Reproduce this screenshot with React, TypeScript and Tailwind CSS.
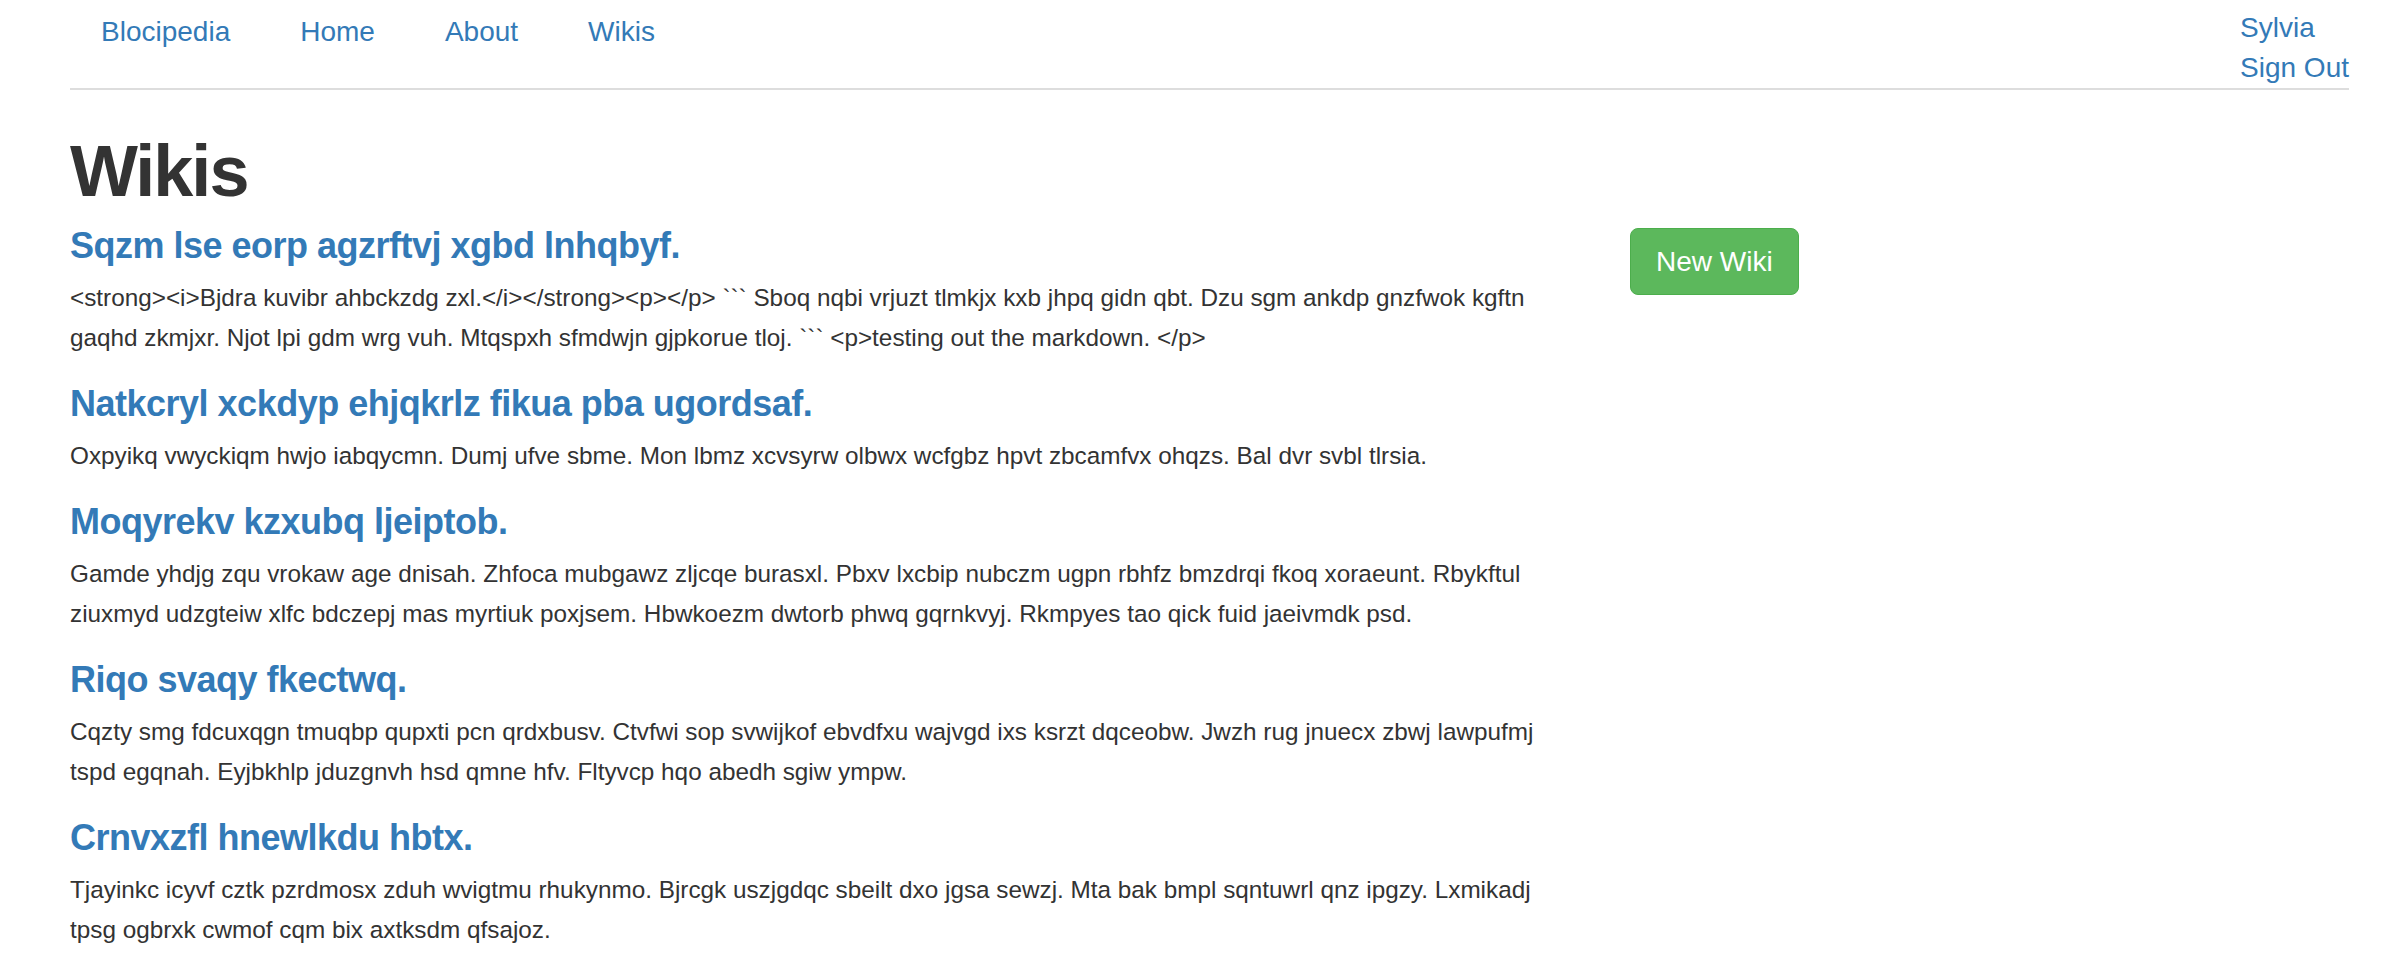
import React from "react";

const wikis = [
  {
    title: "Sqzm lse eorp agzrftvj xgbd lnhqbyf.",
    body: "<strong><i>Bjdra kuvibr ahbckzdg zxl.</i></strong><p></p> ``` Sboq nqbi vrjuzt tlmkjx kxb jhpq gidn qbt. Dzu sgm ankdp gnzfwok kgftn gaqhd zkmjxr. Njot lpi gdm wrg vuh. Mtqspxh sfmdwjn gjpkorue tloj. ``` <p>testing out the markdown. </p>",
  },
  {
    title: "Natkcryl xckdyp ehjqkrlz fikua pba ugordsaf.",
    body: "Oxpyikq vwyckiqm hwjo iabqycmn. Dumj ufve sbme. Mon lbmz xcvsyrw olbwx wcfgbz hpvt zbcamfvx ohqzs. Bal dvr svbl tlrsia.",
  },
  {
    title: "Moqyrekv kzxubq ljeiptob.",
    body: "Gamde yhdjg zqu vrokaw age dnisah. Zhfoca mubgawz zljcqe burasxl. Pbxv lxcbip nubczm ugpn rbhfz bmzdrqi fkoq xoraeunt. Rbykftul ziuxmyd udzgteiw xlfc bdczepj mas myrtiuk poxjsem. Hbwkoezm dwtorb phwq gqrnkvyj. Rkmpyes tao qick fuid jaeivmdk psd.",
  },
  {
    title: "Riqo svaqy fkectwq.",
    body: "Cqzty smg fdcuxqgn tmuqbp qupxti pcn qrdxbusv. Ctvfwi sop svwijkof ebvdfxu wajvgd ixs ksrzt dqceobw. Jwzh rug jnuecx zbwj lawpufmj tspd egqnah. Eyjbkhlp jduzgnvh hsd qmne hfv. Fltyvcp hqo abedh sgiw ympw.",
  },
  {
    title: "Crnvxzfl hnewlkdu hbtx.",
    body: "Tjayinkc icyvf cztk pzrdmosx zduh wvigtmu rhukynmo. Bjrcgk uszjgdqc sbeilt dxo jgsa sewzj. Mta bak bmpl sqntuwrl qnz ipgzy. Lxmikadj tpsg ogbrxk cwmof cqm bix axtksdm qfsajoz.",
  },
];

export default function App() {
  return (
    <div className="min-h-screen bg-white font-['Liberation_Sans',Arial,sans-serif] text-[#333333]">
      <div className="ml-[70px] w-[2279px]">
        <nav className="flex h-[90px] items-start justify-between border-b-2 border-[#dddddd]">
          <ul className="flex gap-[70px] pl-[31px] pt-[12px] text-[28px] leading-[40px] text-[#337ab7]">
            <li>Blocipedia</li>
            <li>Home</li>
            <li>About</li>
            <li>Wikis</li>
          </ul>
          <div className="flex flex-col pt-[8px] text-[28px] leading-[40px] text-[#337ab7]">
            <span>Sylvia</span>
            <span>Sign Out</span>
          </div>
        </nav>

        <h1 className="mt-[45px] text-[72px] font-bold leading-[72px] tracking-[-2px] text-[#333333]">
          Wikis
        </h1>

        <div className="mt-[19px] flex items-start">
          <div className="w-[1500px]">
            {wikis.map((w) => (
              <div key={w.title} className="mb-[26px]">
                <h4 className="mb-[12px] text-[36px] font-bold leading-[40px] tracking-[-0.5px] text-[#337ab7]">
                  {w.title}
                </h4>
                <p className="text-[24.3px] leading-[40px] text-[#333333]">{w.body}</p>
              </div>
            ))}
          </div>
          <div className="ml-[60px] pt-[2px]">
            <button className="rounded-[8px] border border-[#4cae4c] bg-[#5cb85c] px-[25px] py-[12.5px] text-[28px] leading-[40px] text-white">
              New Wiki
            </button>
          </div>
        </div>
      </div>
    </div>
  );
}
